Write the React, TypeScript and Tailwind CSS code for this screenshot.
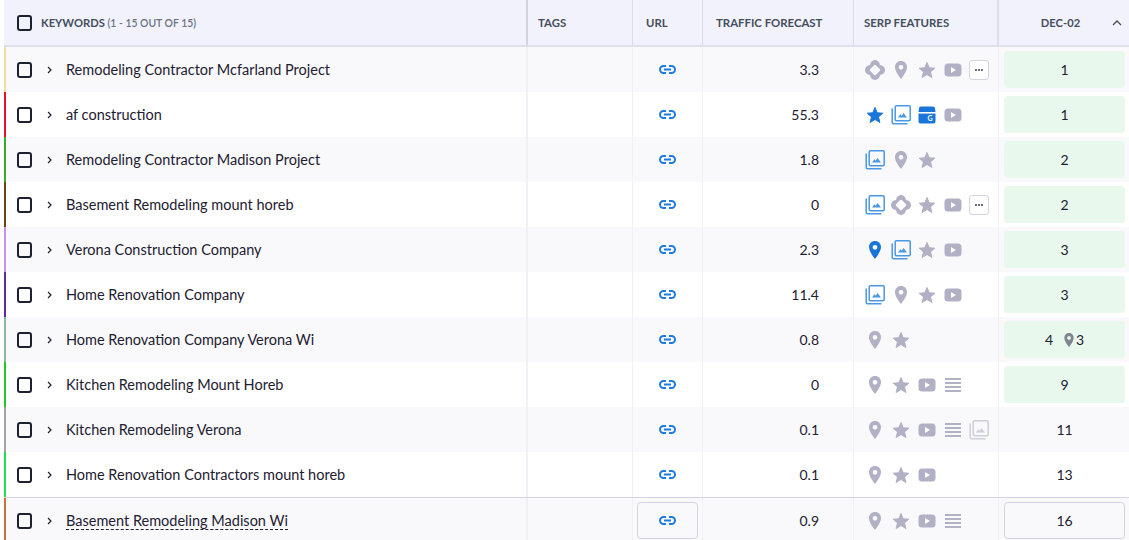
const GRID = "grid grid-cols-[524px_105px_70px_151px_145px_130px]";
const font = { fontFamily: "Lato, sans-serif" };

type Icon = "diamond" | "pin" | "star" | "video" | "more" | "store" | "lines" | "pinBlue" | "starBlue" | "photosBlue" | "photosPale";

const rows: { name: string; color: string; traffic: string; icons: Icon[]; rank: string; green: boolean }[] = [
  { name: "Remodeling Contractor Mcfarland Project", color: "bg-[#efe096]", traffic: "3.3", icons: ["diamond", "pin", "star", "video", "more"], rank: "1", green: true },
  { name: "af construction", color: "bg-[#e8132b]", traffic: "55.3", icons: ["starBlue", "photosBlue", "store", "video"], rank: "1", green: true },
  { name: "Remodeling Contractor Madison Project", color: "bg-[#3aa829]", traffic: "1.8", icons: ["photosBlue", "pin", "star"], rank: "2", green: true },
  { name: "Basement Remodeling mount horeb", color: "bg-[#6b4612]", traffic: "0", icons: ["photosBlue", "diamond", "star", "video", "more"], rank: "2", green: true },
  { name: "Verona Construction Company", color: "bg-[#c792f2]", traffic: "2.3", icons: ["pinBlue", "photosBlue", "star", "video"], rank: "3", green: true },
  { name: "Home Renovation Company", color: "bg-[#5a2ca0]", traffic: "11.4", icons: ["photosBlue", "pin", "star", "video"], rank: "3", green: true },
  { name: "Home Renovation Company Verona Wi", color: "bg-[#86b9a0]", traffic: "0.8", icons: ["pin", "star"], rank: "4", green: true },
  { name: "Kitchen Remodeling Mount Horeb", color: "bg-[#1fcb1f]", traffic: "0", icons: ["pin", "star", "video", "lines"], rank: "9", green: true },
  { name: "Kitchen Remodeling Verona", color: "bg-[#a3a6a0]", traffic: "0.1", icons: ["pin", "star", "video", "lines", "photosPale"], rank: "11", green: false },
  { name: "Home Renovation Contractors mount horeb", color: "bg-[#22dd55]", traffic: "0.1", icons: ["pin", "star", "video"], rank: "13", green: false },
  { name: "Basement Remodeling Madison Wi", color: "bg-[#c8703c]", traffic: "0.9", icons: ["pin", "star", "video", "lines"], rank: "16", green: false },
];

function Pin({ color, size = 18 }: { color: string; size?: number }) {
  return (
    <svg width={size} height={size} viewBox="0 0 18 18">
      <path fillRule="evenodd" fill={color} d="M9 0C5.500 0 3 2.700 3 6.100c0 4.400 4.200 9.600 6 11.900 1.800-2.300 6-7.500 6-11.900C15 2.700 12.500 0 9 0Zm0 3.900a2.400 2.400 0 1 1 0 4.800 2.400 2.400 0 0 1 0-4.800Z" />
    </svg>
  );
}

function Star({ color }: { color: string }) {
  return (
    <svg width="18" height="18" viewBox="0 0 18 18">
      <path fill={color} stroke={color} strokeWidth="1" strokeLinejoin="round" d="M9 1.500l2.200 5.300 5.600.4-4.300 3.700 1.400 5.600L9 13.500l-4.900 3 1.400-5.600-4.300-3.700 5.600-.4Z" />
    </svg>
  );
}

function Photos({ color }: { color: string }) {
  return (
    <svg width="20" height="20" viewBox="0 0 20 20" fill="none">
      <path stroke={color} strokeWidth="1.500" d="M1.200 3.500v14a1.300 1.300 0 0 0 1.300 1.300h14" />
      <rect x="4.200" y="0.800" width="15" height="15" rx="1.200" stroke={color} strokeWidth="1.500" />
      <path fill={color} d="M7 12.500l2.400-3.200 1.400 1.400 1.800-2.600 3.400 4.400Z" />
    </svg>
  );
}

function SerpIcon({ icon }: { icon: Icon }) {
  const gray = "#b1b0c4";
  const blue = "#1976d8";
  if (icon === "pin") return <Pin color={gray} />;
  if (icon === "pinBlue") return <Pin color={blue} />;
  if (icon === "star") return <Star color={gray} />;
  if (icon === "starBlue") return <Star color={blue} />;
  if (icon === "photosBlue") return <Photos color="#4a97e4" />;
  if (icon === "photosPale") return <Photos color="#cfcfdc" />;
  if (icon === "diamond")
    return (
      <svg width="20" height="20" viewBox="0 0 20 20">
        <path
          fillRule="evenodd"
          fill={gray}
          d="M10 0C12.800 0 14.600 2.200 15 5 17.800 5.400 20 7.200 20 10 20 12.800 17.800 14.600 15 15 14.600 17.800 12.800 20 10 20 7.200 20 5.400 17.800 5 15 2.200 14.600 0 12.800 0 10 0 7.200 2.200 5.400 5 5 5.400 2.200 7.200 0 10 0ZM9 5.200 5.200 9Q4.200 10 5.200 11L9 14.800Q10 15.800 11 14.800L14.800 11Q15.800 10 14.800 9L11 5.200Q10 4.200 9 5.200Z"
        />
      </svg>
    );
  if (icon === "video")
    return (
      <svg width="18" height="14" viewBox="0 0 18 14">
        <rect x="0.500" y="0.500" width="17" height="13" rx="3.500" fill={gray} />
        <path fill="#fff" d="M7 4l5 3-5 3Z" />
      </svg>
    );
  if (icon === "lines")
    return (
      <svg width="16" height="14" viewBox="0 0 16 14" fill={gray}>
        <rect y="0" width="16" height="2" />
        <rect y="4" width="16" height="2" />
        <rect y="8" width="16" height="2" />
        <rect y="12" width="16" height="2" />
      </svg>
    );
  if (icon === "store")
    return (
      <svg width="18" height="18" viewBox="0 0 18 18">
        <path fill={blue} d="M3 0.500h12a2 2 0 0 1 2 1.500l.5 4H0.500L1 2a2 2 0 0 1 2-1.500ZM0.500 7.500h17V15.500a2 2 0 0 1-2 2h-13a2 2 0 0 1-2-2Z" />
        <path stroke="#fff" strokeWidth="1" strokeDasharray="1.500 1.500" d="M2 6.800h14" />
        <text x="12" y="15" fontSize="7" fontWeight="700" fill="#fff" textAnchor="middle">
          G
        </text>
      </svg>
    );
  return (
    <div className="flex h-5 w-5 items-center justify-center gap-px rounded-[3px] border border-[#d3d3e2] bg-white">
      <span className="h-[2px] w-[2px] bg-[#6c6c80]" />
      <span className="h-[2px] w-[2px] bg-[#6c6c80]" />
      <span className="h-[2px] w-[2px] bg-[#6c6c80]" />
    </div>
  );
}

function LinkIcon() {
  return (
    <svg width="17" height="9" viewBox="0 0 17 9" fill="none" stroke="#1e7ce0" strokeWidth="2">
      <path d="M7 1H4.500a3.500 3.500 0 0 0 0 7H7M10 1h2.500a3.500 3.500 0 0 1 0 7H10M5 4.500h7" />
    </svg>
  );
}

function Checkbox() {
  return <span className="block h-4 w-[15px] shrink-0 rounded-[3px] border-2 border-[#1d2030]" />;
}

function Head({ label, cls }: { label: string; cls: string }) {
  return <div className={`flex items-center pt-px text-[11.4px] font-bold text-[#454e5c] ${cls}`}>{label}</div>;
}

export default function App() {
  return (
    <div className="h-[540px] w-[1129px] overflow-hidden bg-white pl-1 text-[#1d2030]" style={font}>
      <div className={`${GRID} h-[47px] border-b-2 border-[#e0e0ec] bg-[#f1f2fb]`}>
        <div className="flex items-center border-r-2 border-[#d3d3e2] pl-[13px]">
          <Checkbox />
          <span className="ml-[9px] pt-px text-[11.2px] font-bold text-[#454e5c]">
            KEYWORDS <span className="text-[10.4px] font-semibold text-[#6b7280]">(1 - 15 OUT OF 15)</span>
          </span>
        </div>
        <Head label="TAGS" cls="border-r border-[#dcdce9] pl-[10px]" />
        <Head label="URL" cls="border-r border-[#dcdce9] pl-[13px]" />
        <Head label="TRAFFIC FORECAST" cls="border-r border-[#dcdce9] pl-[13px]" />
        <Head label="SERP FEATURES" cls="border-r-2 border-[#dcdce9] pl-[10px]" />
        <div className="flex items-center justify-between pl-[10px] pr-[7px] pt-px text-[11.2px] font-bold text-[#454e5c]">
          <span className="flex-1 text-center">DEC-02</span>
          <svg width="10" height="6" viewBox="0 0 10 6" fill="none" stroke="#454e5c" strokeWidth="1.300">
            <path d="M1 5l4-4 4 4" />
          </svg>
        </div>
      </div>
      {rows.map((row, i) => {
        const last = i === rows.length - 1;
        return (
          <div
            key={row.name}
            className={`${GRID} ${last ? "h-[44px] border-t border-[#d3d3e2]" : "h-[45px]"} ${i % 2 === 0 ? "bg-[#f9f9fc]" : "bg-white"}`}
          >
            <div className="flex items-center border-r-2 border-[#f0f0f6]">
              <span className={`h-full w-[2px] shrink-0 ${row.color}`} />
              <span className="ml-[11px]">
                <Checkbox />
              </span>
              <svg className="ml-[15px]" width="5" height="8" viewBox="0 0 5 8" fill="none" stroke="#1d2030" strokeWidth="1.200">
                <path d="M1 1l3 3-3 3" />
              </svg>
              <span className={`ml-[14px] text-[14.5px] ${last ? "border-b border-dashed border-[#1d2030] leading-[17px]" : "pt-px"}`}>
                {row.name}
              </span>
            </div>
            <div className="border-r border-[#f0f0f6]" />
            <div className="flex items-center justify-center border-r border-[#f0f0f6] p-[4px]">
              {last ? (
                <div className="flex h-[37px] w-full items-center justify-center rounded-[4px] border border-[#d3d3e2]">
                  <LinkIcon />
                </div>
              ) : (
                <LinkIcon />
              )}
            </div>
            <div className="flex items-center justify-end border-r border-[#f0f0f6] pr-[34px] text-[14px]">{row.traffic}</div>
            <div className="flex items-center border-r border-[#f0f0f6] pl-2">
              {row.icons.map((icon, k) => (
                <div key={k} className="flex w-[26px] items-center justify-center">
                  <SerpIcon icon={icon} />
                </div>
              ))}
            </div>
            <div className="flex items-center pl-[5px] pr-[4px]">
              <div
                className={`flex h-[37px] w-full items-center justify-center rounded-[4px] text-[14px] ${
                  row.green ? "bg-[#e9f8ec]" : last ? "border border-[#d3d3e2]" : ""
                }`}
              >
                {row.rank}
                {i === 6 && (
                  <span className="ml-[9px] flex items-center">
                    <Pin color="#808590" size={14} />3
                  </span>
                )}
              </div>
            </div>
          </div>
        );
      })}
    </div>
  );
}
